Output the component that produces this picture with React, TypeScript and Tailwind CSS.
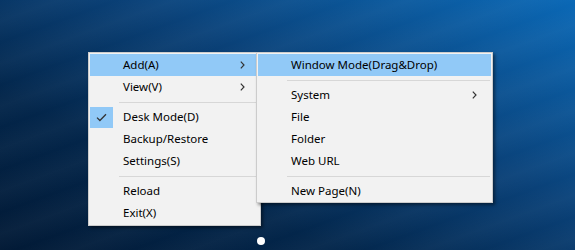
import React from "react";

const Chevron = () => (
  <svg width="5" height="8" viewBox="0 0 5 8" className="block">
    <path d="M0.8 0.6 L4 4 L0.8 7.4" fill="none" stroke="#333333" strokeWidth="1.2" />
  </svg>
);

const Check = () => (
  <svg width="11" height="9" viewBox="0 0 11 9" className="block">
    <path d="M1 4.6 L3.9 7.5 L10 1.2" fill="none" stroke="#333333" strokeWidth="1.3" />
  </svg>
);

type Item = { label?: string; sep?: boolean; arrow?: boolean; hl?: boolean; check?: boolean };

const dots =
  "bg-[radial-gradient(circle,rgba(110,150,200,0.22)_0.5px,transparent_0.7px)] bg-[length:4px_4px]";

function Row({ it }: { it: Item }) {
  if (it.sep)
    return <div className="ml-[29px] mr-[1px] mt-[4px] mb-[3px] h-px bg-[#d7d7d7]" />;
  return (
    <div className={`flex h-[22px] items-center ${it.hl ? "bg-[#91c9f7]" : ""}`}>
      <div className="flex h-[22px] w-[33px] shrink-0 items-center">
        {it.check ? (
          <div className="flex h-[21px] w-[23px] items-center justify-center bg-[#91c9f7]">
            <Check />
          </div>
        ) : it.hl ? (
          <div className={`h-[22px] w-[23px] ${dots}`} />
        ) : null}
      </div>
      <div className="flex-1 whitespace-nowrap text-[11.5px] leading-none text-black">{it.label}</div>
      {it.arrow && (
        <div className="flex w-[20px] shrink-0 items-center justify-start pl-[1px]">
          <Chevron />
        </div>
      )}
    </div>
  );
}

const mainItems: Item[] = [
  { label: "Add(A)", arrow: true, hl: true },
  { label: "View(V)", arrow: true },
  { sep: true },
  { label: "Desk Mode(D)", check: true },
  { label: "Backup/Restore" },
  { label: "Settings(S)" },
  { sep: true },
  { label: "Reload" },
  { label: "Exit(X)" },
];

const subItems: Item[] = [
  { label: "Window Mode(Drag&Drop)", hl: true },
  { sep: true },
  { label: "System", arrow: true },
  { label: "File" },
  { label: "Folder" },
  { label: "Web URL" },
  { sep: true },
  { label: "New Page(N)" },
];

export default function App() {
  return (
    <div
      className="relative h-[250px] w-[575px] overflow-hidden bg-[linear-gradient(25deg,#021a36_0%,#03264b_30%,#0a4178_60%,#0b5a9f_85%,#0a68b6_100%)]"
      style={{ fontFamily: '"Noto Sans", "Open Sans", sans-serif' }}
    >
      <div className="absolute inset-0 bg-[repeating-linear-gradient(160deg,rgba(255,255,255,0)_0px,rgba(255,255,255,0.03)_20px,rgba(255,255,255,0)_40px)]" />
      <div className="relative flex items-start pl-[88px] pt-[52px]">
        <div className="w-[173px] border border-[#cccccc] bg-[#f2f2f2] p-[1px] shadow-[2px_2px_3px_rgba(0,0,0,0.45)]">
          {mainItems.map((it, i) => (
            <Row key={i} it={it} />
          ))}
        </div>
        <div className="relative z-10 ml-[-5px] w-[237px] border border-[#cccccc] bg-[#f2f2f2] p-[1px] pb-0 shadow-[2px_2px_3px_rgba(0,0,0,0.45)]">
          {subItems.map((it, i) => (
            <Row key={i} it={it} />
          ))}
        </div>
      </div>
      <div className="absolute left-[257px] top-[237px] h-[8px] w-[8px] rounded-full bg-white" />
    </div>
  );
}
